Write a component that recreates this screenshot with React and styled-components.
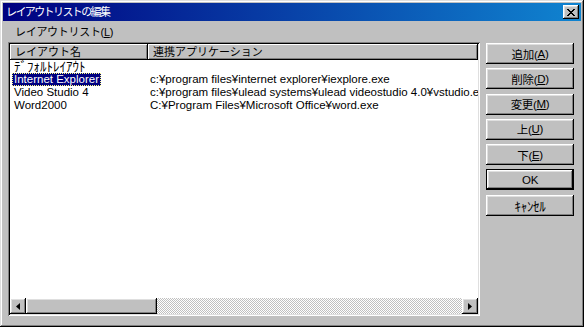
import React from 'react';
import styled, { createGlobalStyle } from 'styled-components';

const FONT = `"Liberation Sans", "Noto Sans CJK JP", sans-serif`;

const GlobalStyle = createGlobalStyle`
  html, body {
    margin: 0;
    padding: 0;
    background: #c0c0c0;
  }
  body {
    font-family: ${FONT};
    font-size: 11px;
    color: #000;
  }
`;

const raised = `
  box-shadow: inset -1px -1px #000, inset 1px 1px #fff,
    inset -2px -2px #808080, inset 2px 2px #dfdfdf;
`;

const Window = styled.div`
  width: 584px;
  height: 327px;
  box-sizing: border-box;
  padding: 3px;
  background: #c0c0c0;
  box-shadow: inset -1px -1px #000, inset 1px 1px #dfdfdf,
    inset -2px -2px #808080, inset 2px 2px #fff;
  display: flex;
  flex-direction: column;
`;

const TitleBar = styled.div`
  height: 18px;
  display: flex;
  align-items: center;
  justify-content: space-between;
  padding: 0 2px 0 3px;
  background: linear-gradient(90deg, #000080, #1084d0);
  color: #fff;
`;

const Title = styled.span`
  font-size: 11px;
  letter-spacing: -1.6px;
  line-height: 18px;
`;

const CloseButton = styled.div`
  width: 16px;
  height: 14px;
  display: flex;
  align-items: center;
  justify-content: center;
  background: #c0c0c0;
  ${raised}
`;

const Body = styled.div`
  flex: 1;
  display: flex;
  gap: 6px;
  padding: 0 7px 8px 5px;
`;

const LeftColumn = styled.div`
  width: 472px;
  display: flex;
  flex-direction: column;
`;

const Label = styled.div`
  height: 21px;
  box-sizing: border-box;
  padding: 4px 0 0 7px;
  line-height: 14px;
  letter-spacing: -0.3px;
`;

const Key = styled.span`
  text-decoration: underline;
`;

const Kana = styled.span`
  font-size: 13px;
`;

const ListBox = styled.div`
  flex: 1;
  padding: 2px;
  display: flex;
  flex-direction: column;
  background: #fff;
  box-shadow: inset 1px 1px #808080, inset -1px -1px #fff,
    inset 2px 2px #000, inset -2px -2px #dfdfdf;
`;

const HeaderRow = styled.div`
  display: flex;
  height: 16px;
`;

const HeaderCell = styled.div`
  width: ${({ $w }) => ($w ? `${$w}px` : 'auto')};
  flex: ${({ $w }) => ($w ? 'none' : '1')};
  background: #c0c0c0;
  box-shadow: inset -1px -1px #000, inset 1px 1px #fff, inset -2px -2px #808080;
  padding-left: 5px;
  line-height: 16px;
  box-sizing: border-box;
  white-space: nowrap;
  overflow: hidden;
`;

const Rows = styled.div`
  flex: 1;
  overflow: hidden;
  font-size: 11.5px;
`;

const Row = styled.div`
  display: flex;
  height: 13px;
  line-height: 13px;
  white-space: nowrap;
`;

const NameCell = styled.div`
  width: 138px;
  flex: none;
  padding-left: 2px;
  box-sizing: border-box;
`;

const NameText = styled.span`
  display: inline-block;
  height: 13px;
  padding: 0 2px;
  background: ${({ $selected }) => ($selected ? '#000080' : 'transparent')};
  color: ${({ $selected }) => ($selected ? '#fff' : '#000')};
  outline: ${({ $selected }) => ($selected ? '1px dotted #ffff80' : 'none')};
  outline-offset: -1px;
`;

const AppCell = styled.div`
  flex: 1;
  padding-left: 2px;
  overflow: hidden;
`;

const ScrollBar = styled.div`
  display: flex;
  height: 16px;
`;

const ArrowButton = styled.div`
  width: 16px;
  height: 16px;
  flex: none;
  display: flex;
  align-items: center;
  justify-content: center;
  background: #c0c0c0;
  ${raised}
`;

const Thumb = styled.div`
  width: 131px;
  flex: none;
  background: #c0c0c0;
  ${raised}
`;

const Track = styled.div`
  flex: 1;
  background: repeating-conic-gradient(#c0c0c0 0 25%, #fff 0 50%) 0 0 / 2px 2px;
`;

const ButtonColumn = styled.div`
  width: 88px;
  padding-top: 22px;
  display: flex;
  flex-direction: column;
  gap: 4.3px;
`;

const Button = styled.div`
  height: 21px;
  box-sizing: border-box;
  display: flex;
  align-items: center;
  justify-content: center;
  background: #c0c0c0;
  font-size: 11.5px;
  letter-spacing: -0.3px;
  border: ${({ $default }) => ($default ? '1px solid #000' : 'none')};
  ${raised}
`;

const rows = [
  { name: <Kana>ﾃﾞﾌｫﾙﾄﾚｲｱｳﾄ</Kana>, id: 'default', app: '' },
  { name: 'Internet Explorer', id: 'ie', app: 'c:¥program files¥internet explorer¥iexplore.exe', selected: true },
  { name: 'Video Studio 4', id: 'vs', app: 'c:¥program files¥ulead systems¥ulead videostudio 4.0¥vstudio.exe' },
  { name: 'Word2000', id: 'word', app: 'C:¥Program Files¥Microsoft Office¥word.exe' },
];

const buttons = [
  { label: '追加', key: 'A' },
  { label: '削除', key: 'D' },
  { label: '変更', key: 'M' },
  { label: '上', key: 'U' },
  { label: '下', key: 'E' },
  { label: 'OK', isDefault: true },
  { label: <Kana>ｷｬﾝｾﾙ</Kana>, id: 'cancel' },
];

const Arrow = ({ dir }) => (
  <svg width="4" height="7" viewBox="0 0 4 7">
    {dir === 'left'
      ? <path d="M0 3.5 L4 0 L4 7 Z" fill="#000" />
      : <path d="M4 3.5 L0 0 L0 7 Z" fill="#000" />}
  </svg>
);

export default function App() {
  return (
    <>
      <GlobalStyle />
      <Window>
        <TitleBar>
          <Title>レイアウトリストの編集</Title>
          <CloseButton>
            <svg width="8" height="7" viewBox="0 0 8 7" shapeRendering="crispEdges">
              <path
                d="M0 0h2v1h-2zM6 0h2v1h-2zM1 1h2v1h-2zM5 1h2v1h-2zM2 2h4v1h-4zM3 3h2v1h-2zM2 4h4v1h-4zM1 5h2v1h-2zM5 5h2v1h-2zM0 6h2v1h-2zM6 6h2v1h-2z"
                fill="#000"
              />
            </svg>
          </CloseButton>
        </TitleBar>
        <Body>
          <LeftColumn>
            <Label>レイアウトリスト(<Key>L</Key>)</Label>
            <ListBox>
              <HeaderRow>
                <HeaderCell $w={138}>レイアウト名</HeaderCell>
                <HeaderCell>連携アプリケーション</HeaderCell>
              </HeaderRow>
              <Rows>
                {rows.map((r) => (
                  <Row key={r.id}>
                    <NameCell>
                      <NameText $selected={r.selected}>{r.name}</NameText>
                    </NameCell>
                    <AppCell>{r.app}</AppCell>
                  </Row>
                ))}
              </Rows>
              <ScrollBar>
                <ArrowButton><Arrow dir="left" /></ArrowButton>
                <Thumb />
                <Track />
                <ArrowButton><Arrow dir="right" /></ArrowButton>
              </ScrollBar>
            </ListBox>
          </LeftColumn>
          <ButtonColumn>
            {buttons.map((b) => (
              <Button key={b.id || b.label} $default={b.isDefault}>
                {b.label}
                {b.key && <>(<Key>{b.key}</Key>)</>}
              </Button>
            ))}
          </ButtonColumn>
        </Body>
      </Window>
    </>
  );
}
